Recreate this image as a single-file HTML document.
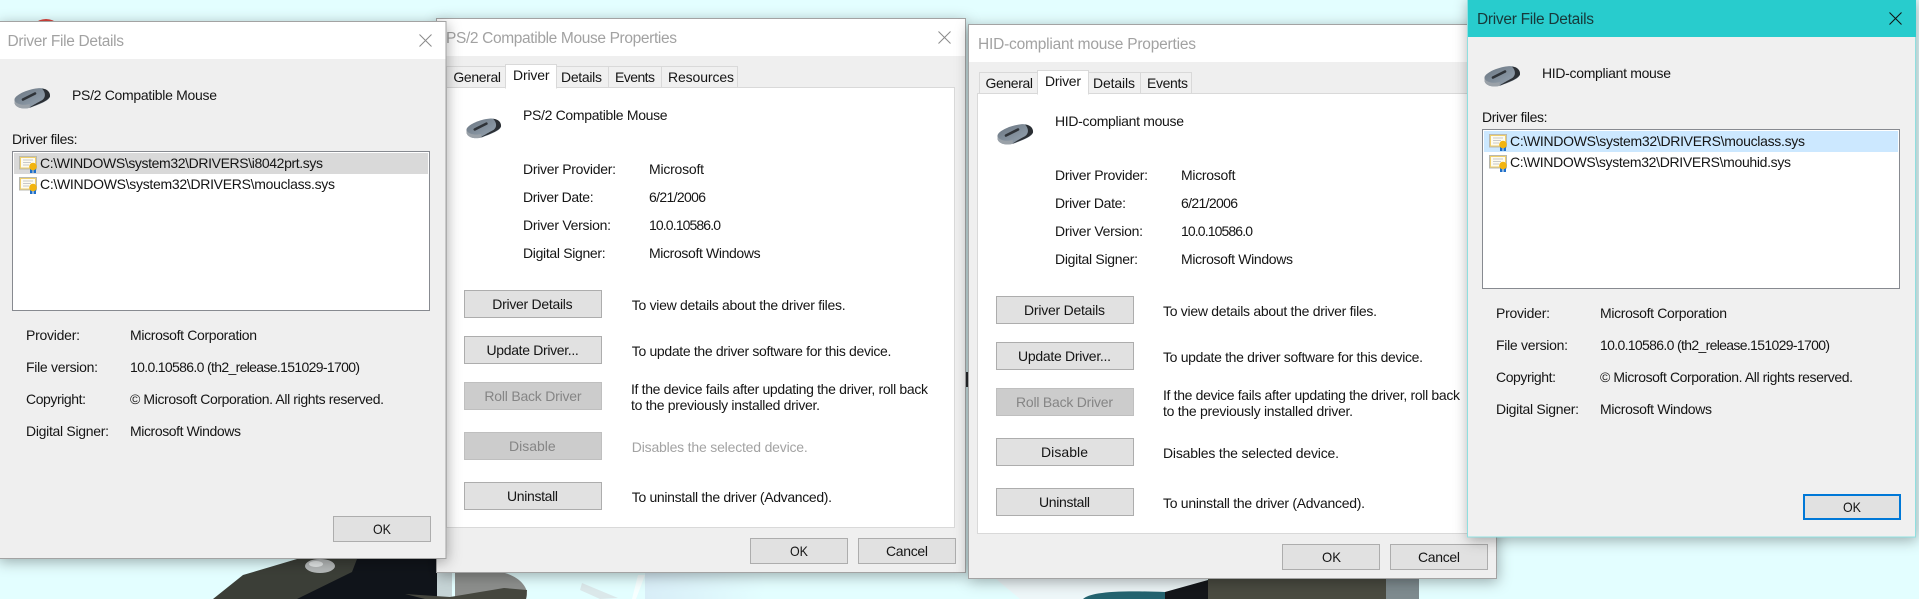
<!DOCTYPE html>
<html><head><meta charset="utf-8"><style>
html,body{margin:0;padding:0;background:#e3feff;overflow:hidden}
svg{display:block;position:absolute;left:0;top:0}
text{font-family:"Liberation Sans",sans-serif;font-size:14px;fill:#151515}
.t{font-size:15.5px;fill:#a2a2a2}
.d{fill:#858585}
.l{fill:#a3a3a3}
.b{fill:#e1e1e1;stroke:#adadad;stroke-width:1}
.g{fill:#cccccc;stroke:#bfbfbf;stroke-width:1}
.tab{fill:#f0f0f0;stroke:#d9d9d9;stroke-width:1}
.at{fill:#fff;stroke:#d9d9d9;stroke-width:1}
.c{stroke:#8a8a8a;stroke-width:1;fill:none}
</style></head><body>
<svg width="1919" height="599" viewBox="0 0 1919 599" xmlns="http://www.w3.org/2000/svg">
<defs>
<filter id="s" x="-10%" y="-10%" width="120%" height="120%"><feDropShadow dx="1" dy="3" stdDeviation="7" flood-color="#000" flood-opacity=".32"/></filter>
<linearGradient id="mg" x1="0" y1="0" x2="1" y2="1"><stop offset="0" stop-color="#69747f"/><stop offset=".6" stop-color="#8895a2"/><stop offset="1" stop-color="#99a4ae"/></linearGradient>
<linearGradient id="wf" x1="0" y1="0" x2="1" y2="0"><stop offset="0" stop-color="#d8edf7"/><stop offset="1" stop-color="#e3feff"/></linearGradient>
<symbol id="mouse" viewBox="0 0 36 20" overflow="visible">
<path d="M.5 11.500C1 7.500 12 1.500 24 .3C31 -.5 36 3 36 8C36 12.500 26 16 17 19.500C10 21.500 2 20.500 .5 15Z" fill="url(#mg)"/>
<path d="M.5 12.500C3 17 10 17.500 16 16C15 18 16 19 17 19.500C10 21.500 2 20.500 .5 15Z" fill="#9aa1a8"/>
<path d="M28 .6C33 .8 36.500 4 36 8.500C34 13 25 16 16 19.500C14 20 22 15.500 27.500 12.500C32 10 32 4.500 28 .6Z" fill="#2b2f34"/>
<path d="M9 11.500L21 5.500" stroke="#2f3338" stroke-width="2.600" stroke-linecap="round"/>
</symbol>
<symbol id="cert" viewBox="0 0 18 17" overflow="visible">
<rect x=".5" y=".5" width="17" height="12.500" fill="#faf3d0" stroke="#b9b9b0"/>
<rect x="1.500" y="1.500" width="15" height="10.500" fill="#fdfbf0" stroke="#efcf6c"/>
<path d="M4 4h10M4 6.500h8M4 9h6" stroke="#c9c9c9"/>
<rect x="11" y="12" width="2.500" height="5" fill="#1f6fc9"/><rect x="14.500" y="12" width="2.500" height="5" fill="#1f6fc9"/>
<circle cx="14" cy="10.500" r="3.800" fill="#f2b40f"/>
</symbol>
</defs>

<!-- wallpaper -->
<rect width="1919" height="599" fill="#e3feff"/>
<circle cx="46" cy="36" r="17" fill="#d8433c"/>
<path d="M213 599L243 575L297 559H380L437 562V599Z" fill="#3b3e37"/>
<path d="M297 599L352 572L357 559H437V599Z" fill="#10141a"/>
<path d="M455 573H505C522 578 530 590 526 599H455Z" fill="#8c8e8c"/>
<path d="M437 573H452V599H437Z" fill="#c6d4d6"/>
<path d="M405 594L450 597L504 588L527 590L526 599H425Z" fill="#45463e"/>
<ellipse cx="320" cy="566" rx="15" ry="7" fill="#b5b9b9"/>
<ellipse cx="316" cy="564" rx="7" ry="3" fill="#e4e8e8"/>
<path d="M582 583L618 598L600 599L580 590Z" fill="#dbe8ea"/>
<rect x="645" y="573" width="120" height="26" fill="url(#wf)"/>
<path d="M638 575L632 599H636L645 575Z" fill="#f6ffff"/>
<path d="M996 579H1208L1190 590L1165 599H1020Z" fill="#eef7f9"/>
<path d="M1083 599C1090 593 1110 590 1165 592V599Z" fill="#23636f"/>
<path d="M1165 592L1208 580L1221 585V599H1165Z" fill="#14161a"/>
<rect x="1208" y="579" width="178" height="20" fill="#4a4b41"/>
<rect x="1386" y="579" width="33" height="20" fill="#7e8b8f"/>
<rect x="965" y="372" width="4" height="15" fill="#2c2f33"/>

<!-- Dialog 2 -->
<g>
<rect x="436.500" y="18.500" width="529" height="554" fill="#efefef" stroke="#a3a3a3" filter="url(#s)"/>
<rect x="437" y="19" width="528" height="37" fill="#fff"/>
<text class="t" x="446" y="43" textLength="231">PS/2 Compatible Mouse Properties</text>
<path class="c" d="M938.500 31.500L950.500 43.500M950.500 31.500L938.500 43.500"/>
<rect x="446.500" y="87.500" width="508" height="440" fill="#fff" stroke="#d9d9d9"/>
<rect class="tab" x="446.500" y="66.500" width="59" height="21"/>
<rect class="tab" x="556.500" y="66.500" width="52" height="21"/>
<rect class="tab" x="608.500" y="66.500" width="53" height="21"/>
<rect class="tab" x="661.500" y="66.500" width="76" height="21"/>
<path d="M505.500 88.500V64.500H556.500V88.500" class="at"/><rect x="506" y="86" width="50" height="4" fill="#fff"/>
<text x="453.400" y="82" textLength="47.600">General</text>
<text x="513" y="80" textLength="36.500">Driver</text>
<text x="561" y="82" textLength="41">Details</text>
<text x="615" y="82" textLength="40">Events</text>
<text x="668" y="82" textLength="66">Resources</text>
<use href="#mouse" x="466" y="118" width="35" height="20"/>
<text x="523" y="120" textLength="144.600">PS/2 Compatible Mouse</text>
<text x="523" y="174" textLength="93">Driver Provider:</text><text x="649" y="174" textLength="55">Microsoft</text>
<text x="523" y="202" textLength="70.600">Driver Date:</text><text x="649" y="202" textLength="57">6/21/2006</text>
<text x="523" y="230" textLength="88">Driver Version:</text><text x="649" y="230" textLength="72">10.0.10586.0</text>
<text x="523" y="258" textLength="82.600">Digital Signer:</text><text x="649" y="258" textLength="111.600">Microsoft Windows</text>
<rect class="b" x="464.500" y="290.500" width="137" height="27"/>
<rect class="b" x="464.500" y="336.500" width="137" height="27"/>
<rect class="g" x="464.500" y="382.500" width="137" height="27"/>
<rect class="g" x="464.500" y="432.500" width="137" height="27"/>
<rect class="b" x="464.500" y="482.500" width="137" height="27"/>
<text x="492.300" y="309" textLength="80.300">Driver Details</text>
<text x="486.500" y="355" textLength="92.300">Update Driver...</text>
<text class="d" x="484.400" y="401" textLength="97.100">Roll Back Driver</text>
<text class="d" x="509" y="451" textLength="46.700">Disable</text>
<text x="507" y="501" textLength="51">Uninstall</text>
<text x="631.800" y="310" textLength="213.800">To view details about the driver files.</text>
<text x="631.800" y="356" textLength="259.600">To update the driver software for this device.</text>
<text x="631" y="394" textLength="297">If the device fails after updating the driver, roll back</text>
<text x="631" y="410" textLength="189">to the previously installed driver.</text>
<text class="l" x="631.800" y="452" textLength="176">Disables the selected device.</text>
<text x="631.800" y="502" textLength="200.200">To uninstall the driver (Advanced).</text>
<rect class="b" x="750.500" y="538.500" width="97" height="25"/>
<rect class="b" x="858.500" y="538.500" width="97" height="25"/>
<text x="790" y="556" textLength="18" lengthAdjust="spacingAndGlyphs">OK</text>
<text x="886" y="556" textLength="42">Cancel</text>
</g>

<!-- Dialog 1 -->
<g>
<rect x="-2" y="21.500" width="448" height="537" fill="#efefef" stroke="#a3a3a3" filter="url(#s)"/>
<rect x="0" y="22" width="445.500" height="37" fill="#fff"/>
<text class="t" x="7.500" y="46" textLength="116.500">Driver File Details</text>
<path class="c" d="M419.500 34.500L431.500 46.500M431.500 34.500L419.500 46.500"/>
<use href="#mouse" x="14" y="88" width="36" height="20"/>
<text x="72" y="100" textLength="145">PS/2 Compatible Mouse</text>
<text x="12" y="144" textLength="65.500">Driver files:</text>
<rect x="12.500" y="151.500" width="417" height="159" fill="#fff" stroke="#878a90"/>
<rect x="14" y="153" width="414" height="21" fill="#d9d9d9"/>
<use href="#cert" x="19" y="156" width="18" height="17"/>
<text x="40" y="168" textLength="283">C:\WINDOWS\system32\DRIVERS\i8042prt.sys</text>
<use href="#cert" x="19" y="177" width="18" height="17"/>
<text x="40" y="189" textLength="295">C:\WINDOWS\system32\DRIVERS\mouclass.sys</text>
<text x="26" y="340" textLength="54">Provider:</text><text x="130" y="340" textLength="127">Microsoft Corporation</text>
<text x="26" y="372" textLength="72">File version:</text><text x="130" y="372" textLength="230">10.0.10586.0 (th2_release.151029-1700)</text>
<text x="26" y="404" textLength="60">Copyright:</text><text x="130" y="404" textLength="254">© Microsoft Corporation. All rights reserved.</text>
<text x="26" y="436" textLength="83">Digital Signer:</text><text x="130" y="436" textLength="111">Microsoft Windows</text>
<rect class="b" x="333.500" y="516.500" width="97" height="25"/>
<text x="373" y="534" textLength="18" lengthAdjust="spacingAndGlyphs">OK</text>
</g>

<!-- Dialog 3 -->
<g>
<rect x="968.500" y="24.500" width="528" height="554" fill="#efefef" stroke="#a3a3a3" filter="url(#s)"/>
<rect x="969" y="25" width="527" height="37" fill="#fff"/>
<text class="t" x="978" y="49" textLength="218">HID-compliant mouse Properties</text>
<rect x="977.500" y="93.500" width="510" height="440" fill="#fff" stroke="#d9d9d9"/>
<rect class="tab" x="979.500" y="72.500" width="58" height="21"/>
<rect class="tab" x="1088.500" y="72.500" width="52" height="21"/>
<rect class="tab" x="1140.500" y="72.500" width="51" height="21"/>
<path d="M1037.500 94.500V70.500H1088.500V94.500" class="at"/><rect x="1038" y="92" width="50" height="4" fill="#fff"/>
<text x="985.500" y="88" textLength="47.500">General</text>
<text x="1045" y="86" textLength="36">Driver</text>
<text x="1093" y="88" textLength="42">Details</text>
<text x="1147" y="88" textLength="41">Events</text>
<use href="#mouse" x="997" y="124" width="36" height="20"/>
<text x="1055" y="126" textLength="129">HID-compliant mouse</text>
<text x="1055" y="180" textLength="93">Driver Provider:</text><text x="1181" y="180" textLength="54.500">Microsoft</text>
<text x="1055" y="208" textLength="71">Driver Date:</text><text x="1181" y="208" textLength="57">6/21/2006</text>
<text x="1055" y="236" textLength="88">Driver Version:</text><text x="1181" y="236" textLength="72">10.0.10586.0</text>
<text x="1055" y="264" textLength="83">Digital Signer:</text><text x="1181" y="264" textLength="112">Microsoft Windows</text>
<rect class="b" x="996.500" y="296.500" width="137" height="27"/>
<rect class="b" x="996.500" y="342.500" width="137" height="27"/>
<rect class="g" x="996.500" y="388.500" width="137" height="27"/>
<rect class="b" x="996.500" y="438.500" width="137" height="27"/>
<rect class="b" x="996.500" y="488.500" width="137" height="27"/>
<text x="1024" y="315" textLength="81">Driver Details</text>
<text x="1018" y="361" textLength="93">Update Driver...</text>
<text class="d" x="1016" y="407" textLength="97">Roll Back Driver</text>
<text x="1041" y="457" textLength="47">Disable</text>
<text x="1039" y="507" textLength="51">Uninstall</text>
<text x="1163" y="316" textLength="214">To view details about the driver files.</text>
<text x="1163" y="362" textLength="260">To update the driver software for this device.</text>
<text x="1163" y="400" textLength="297">If the device fails after updating the driver, roll back</text>
<text x="1163" y="416" textLength="190">to the previously installed driver.</text>
<text x="1163" y="458" textLength="176">Disables the selected device.</text>
<text x="1163" y="508" textLength="202">To uninstall the driver (Advanced).</text>
<rect class="b" x="1282.500" y="544.500" width="97" height="25"/>
<rect class="b" x="1390.500" y="544.500" width="97" height="25"/>
<text x="1322" y="562" textLength="19" lengthAdjust="spacingAndGlyphs">OK</text>
<text x="1418" y="562" textLength="42">Cancel</text>
</g>

<!-- Dialog 4 -->
<g>
<rect x="1467.500" y="-2" width="448" height="539" fill="#f0f0f0" stroke="#8fdfe0" filter="url(#s)"/>
<rect x="1468" y="0" width="448" height="37" fill="#28cccd"/>
<text class="t" style="fill:#17393a" x="1477" y="24" textLength="117">Driver File Details</text>
<path d="M1889.500 12.500L1901.500 24.500M1901.500 12.500L1889.500 24.500" stroke="#111" fill="none"/>
<use href="#mouse" x="1484" y="66" width="36" height="20"/>
<text x="1542" y="78" textLength="129">HID-compliant mouse</text>
<text x="1482" y="122" textLength="65.500">Driver files:</text>
<rect x="1482.500" y="129.500" width="417" height="159" fill="#fff" stroke="#878a90"/>
<rect x="1484" y="131" width="414" height="21" fill="#cce8ff"/>
<use href="#cert" x="1489" y="134" width="18" height="17"/>
<text x="1510" y="146" textLength="295">C:\WINDOWS\system32\DRIVERS\mouclass.sys</text>
<use href="#cert" x="1489" y="155" width="18" height="17"/>
<text x="1510" y="167" textLength="281">C:\WINDOWS\system32\DRIVERS\mouhid.sys</text>
<text x="1496" y="318" textLength="54">Provider:</text><text x="1600" y="318" textLength="127">Microsoft Corporation</text>
<text x="1496" y="350" textLength="72">File version:</text><text x="1600" y="350" textLength="230">10.0.10586.0 (th2_release.151029-1700)</text>
<text x="1496" y="382" textLength="60">Copyright:</text><text x="1600" y="382" textLength="253">© Microsoft Corporation. All rights reserved.</text>
<text x="1496" y="414" textLength="83">Digital Signer:</text><text x="1600" y="414" textLength="112">Microsoft Windows</text>
<rect x="1804" y="495" width="96" height="24" fill="#e1e1e1" stroke="#0078d7" stroke-width="2"/>
<text x="1843" y="512" textLength="18" lengthAdjust="spacingAndGlyphs">OK</text>
</g>
</svg>
</body></html>
